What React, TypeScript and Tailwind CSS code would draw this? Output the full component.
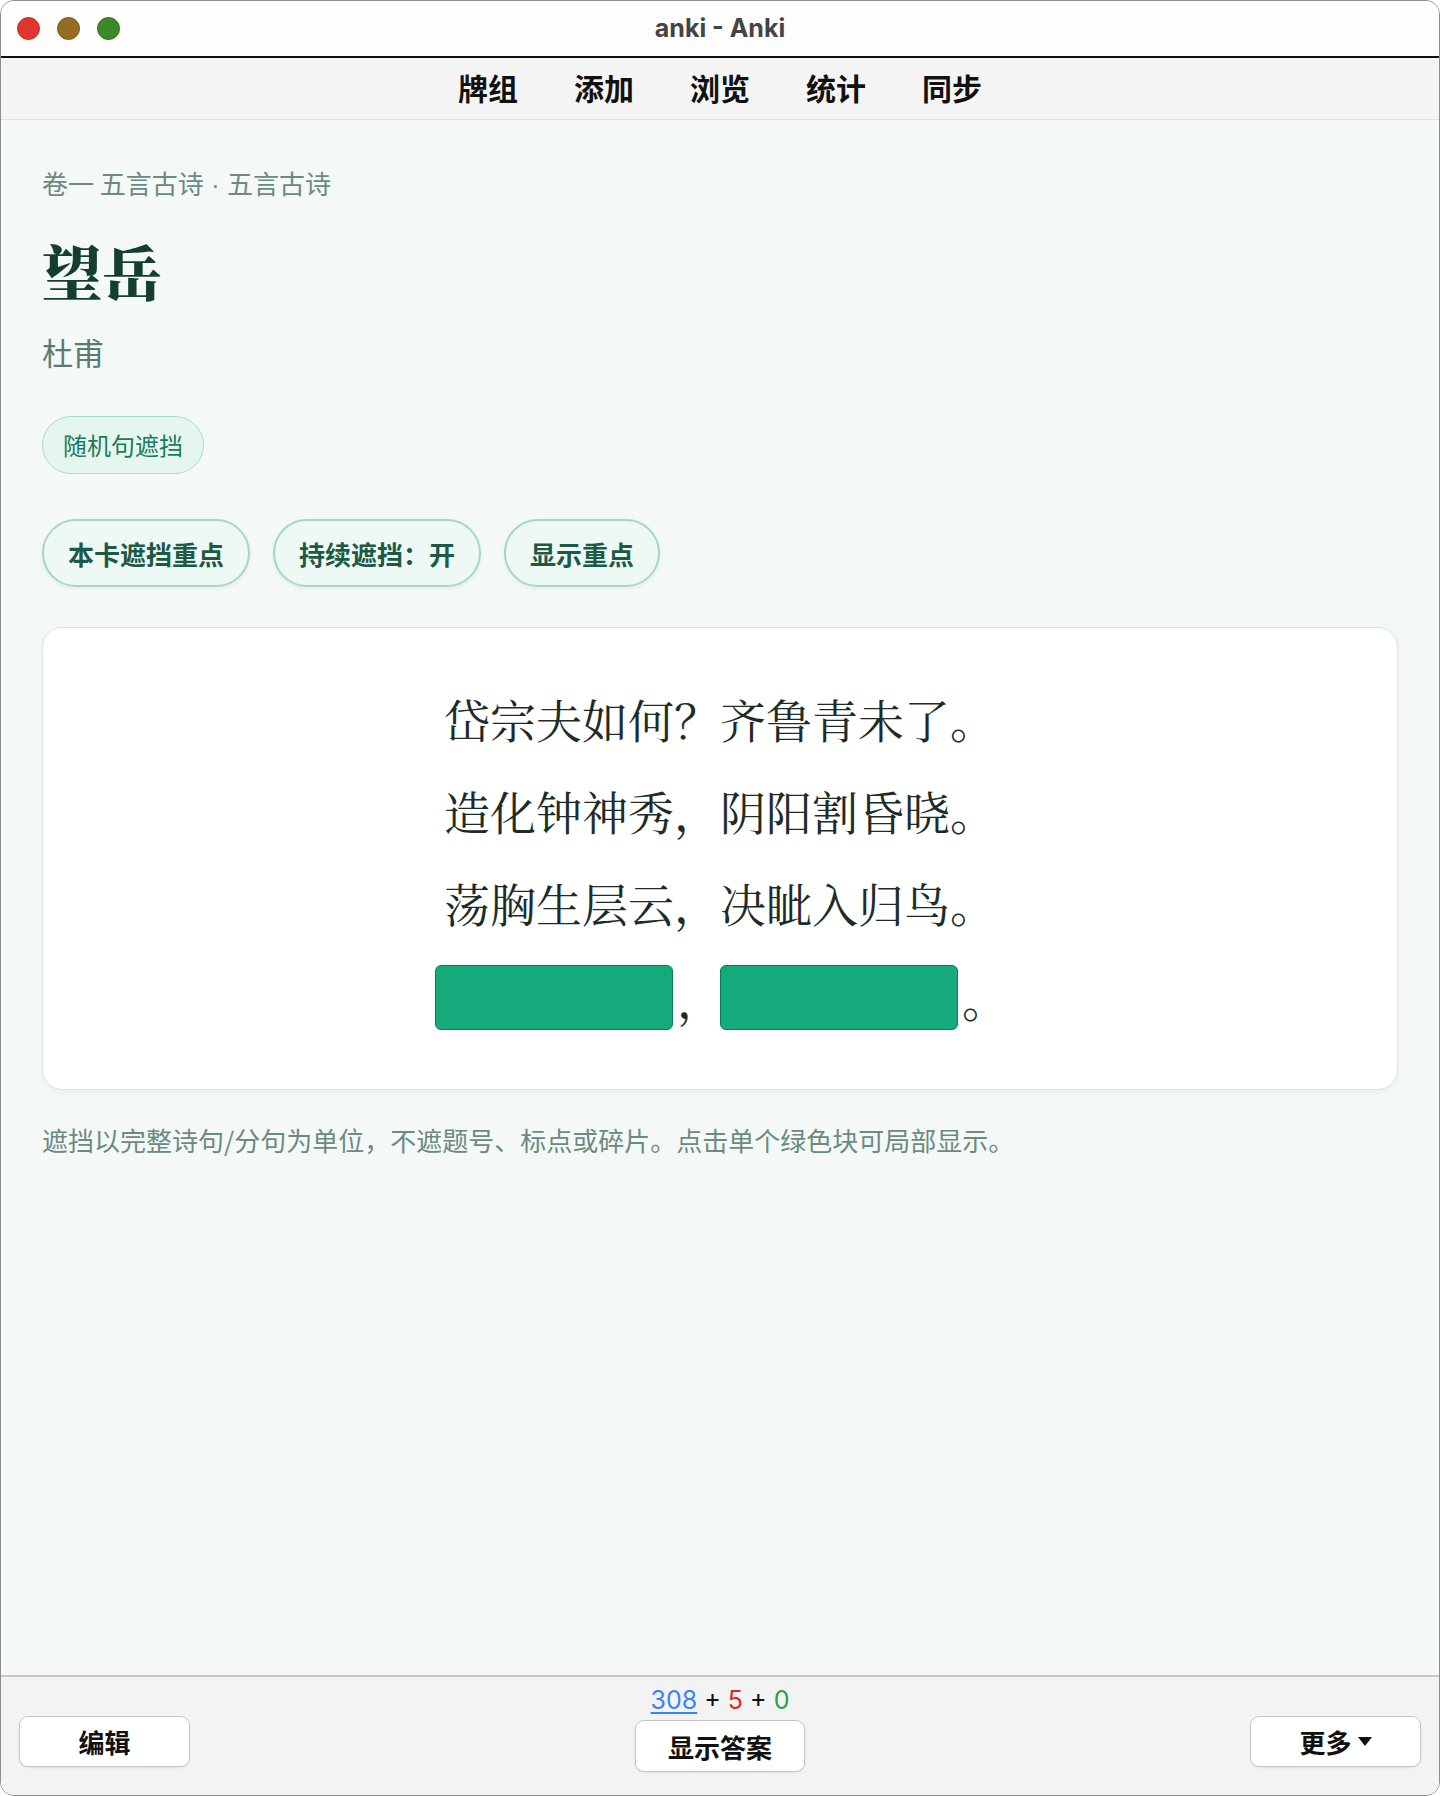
import React from 'react'

const cjk = '"Noto Sans CJK SC", "Noto Sans", sans-serif'
const serifCjk = '"Noto Serif CJK SC", "Noto Serif SC", "Noto Sans CJK SC", serif'

const navItems = ['牌组', '添加', '浏览', '统计', '同步']

const poemLines = ['岱宗夫如何？齐鲁青未了。', '造化钟神秀，阴阳割昏晓。', '荡胸生层云，决眦入归鸟。']

function TrafficLights() {
  return (
    <div className="flex items-center gap-[17px] pl-[16px]">
      <div className="w-[23px] h-[23px] rounded-full bg-[#e0362c] border border-[#c42a21]" />
      <div className="w-[23px] h-[23px] rounded-full bg-[#986b24] border border-[#7e5718]" />
      <div className="w-[23px] h-[23px] rounded-full bg-[#3b8a27] border border-[#2e711c]" />
    </div>
  )
}

function Blank() {
  return (
    <span className="block w-[238px] h-[65px] rounded-[6px] bg-[#15aa7b] border-[1.5px] border-[#0e7a56]" />
  )
}

export default function App() {
  return (
    <div className="min-h-screen bg-white" style={{ fontFamily: cjk }}>
      <div className="h-[1796px] flex flex-col rounded-[14px] overflow-hidden border border-[#8e8e8e] bg-[#f4f8f7]">
        {/* Title bar */}
        <div className="h-[55px] grid grid-cols-[1fr_auto_1fr] items-center bg-[#fdfdfd]">
          <TrafficLights />
          <p
            className="text-[25px] font-bold text-[#444444]"
            style={{ fontFamily: 'Inter, "Liberation Sans", sans-serif' }}
          >
            anki - Anki
          </p>
          <div />
        </div>
        <div className="h-[2px] bg-[#111111]" />

        {/* Top nav */}
        <div className="h-[62px] pb-[3px] flex items-center justify-center gap-[56px] bg-[#f4f4f4] border-b border-[#e0e0e0]">
          {navItems.map(item => (
            <span key={item} className="text-[30px] font-bold text-[#111111] leading-none">
              {item}
            </span>
          ))}
        </div>

        {/* Card area */}
        <div className="flex-1 px-[41px] pt-[46px]">
          <p className="text-[26px] leading-[34px] text-[#6c8a80]">
            卷一 五言古诗<span style={{ fontFamily: '"Liberation Sans", sans-serif' }}> · </span>五言古诗
          </p>

          <h1
            className="mt-[32px] text-[60px] leading-[72px] font-black text-[#143e32]"
            style={{ fontFamily: serifCjk }}
          >
            望岳
          </h1>

          <p className="mt-[26px] text-[31px] leading-[40px] text-[#5b7b70]">杜甫</p>

          <div className="mt-[44px] flex">
            <span className="h-[58px] px-[20px] flex items-center rounded-full bg-[#e5f6ef] border-[1.5px] border-[#a9ddc9] text-[24px] text-[#1b7a59]">
              随机句遮挡
            </span>
          </div>

          <div className="mt-[45px] flex gap-[23px]">
            {['本卡遮挡重点', '持续遮挡：开', '显示重点'].map(label => (
              <button
                key={label}
                className="h-[68px] px-[24px] rounded-full bg-[#eef9f5] border-2 border-[#a3d9c4] text-[26px] font-bold text-[#1d5a46] shadow-[0_2px_4px_rgba(0,0,0,0.06)]"
              >
                {label}
              </button>
            ))}
          </div>

          {/* Poem card */}
          <div className="mt-[40px] rounded-[20px] bg-white border-[1.5px] border-[#d6e7e0] shadow-[0_2px_6px_rgba(0,0,0,0.04)] pt-[44px] pb-[46px]">
            <div className="flex flex-col items-center text-[46px] text-[#1e2c28]" style={{ fontFamily: serifCjk }}>
              {poemLines.map(line => (
                <p key={line} className="leading-[92px]">{line}</p>
              ))}
              <div className="mt-[3px] h-[92px] flex items-center justify-center">
                <Blank />
                <span className="w-[47px] leading-none pl-[4px]">，</span>
                <Blank />
                <span className="w-[47px] leading-none pl-[4px]">。</span>
              </div>
            </div>
          </div>

          <p className="mt-[33px] text-[26px] leading-[34px] text-[#6c8a80]">
            遮挡以完整诗句/分句为单位，不遮题号、标点或碎片。点击单个绿色块可局部显示。
          </p>
        </div>

        {/* Bottom bar */}
        <div className="h-[120px] border-t-2 border-[#c6c6c6] bg-[#f3f3f3] grid grid-cols-[1fr_auto_1fr] items-start">
          <div className="pt-[39px] pl-[18px]">
            <button className="w-[171px] h-[51px] rounded-[9px] bg-white border-[1.5px] border-[#c6c6c6] shadow-[0_1px_2px_rgba(0,0,0,0.08)] text-[26px] font-bold text-[#111111]">
              编辑
            </button>
          </div>
          <div className="pt-[8px] flex flex-col items-center">
            <p className="text-[25px] leading-[30px] text-[#111111]" style={{ fontFamily: 'Inter, "Noto Sans", sans-serif' }}>
              <span className="text-[#3b82f6] underline underline-offset-[3px]">308</span>
              {' + '}
              <span className="text-[#e0262b]">5</span>
              {' + '}
              <span className="text-[#1fa34a]">0</span>
            </p>
            <button className="mt-[5px] w-[170px] h-[52px] rounded-[9px] bg-white border-[1.5px] border-[#c6c6c6] shadow-[0_1px_2px_rgba(0,0,0,0.08)] text-[26px] font-bold text-[#111111]">
              显示答案
            </button>
          </div>
          <div className="pt-[39px] pr-[18px] flex justify-end">
            <button className="w-[171px] h-[51px] rounded-[9px] bg-white border-[1.5px] border-[#c6c6c6] shadow-[0_1px_2px_rgba(0,0,0,0.08)] text-[26px] font-bold text-[#111111] flex items-center justify-center gap-[6px]">
              更多
              <svg width="14" height="9" viewBox="0 0 14 9">
                <path d="M0 0 L14 0 L7 9 Z" fill="#111111" />
              </svg>
            </button>
          </div>
        </div>
      </div>
    </div>
  )
}
